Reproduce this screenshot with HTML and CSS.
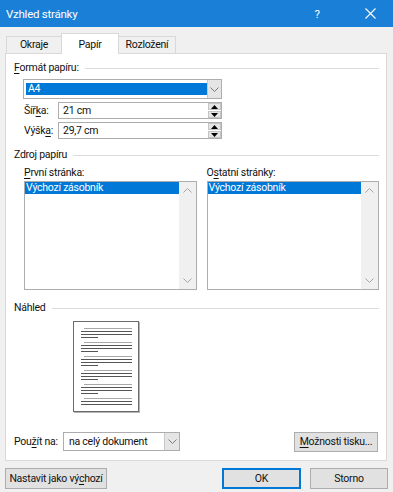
FILE: index.html
```html
<!DOCTYPE html>
<html lang="cs">
<head>
  <meta charset="UTF-8" />
  <title>Vzhled stránky</title>
  <link rel="stylesheet" href="styles.css">
</head>
<body>
  <div class="dialog">
    <header class="titlebar">
      <span class="title">Vzhled stránky</span>
      <span class="help">?</span>
      <span class="close">
        <svg width="11" height="11" viewBox="0 0 11 11"><path d="M0.5 0.5 L10.5 10.5 M10.5 0.5 L0.5 10.5" stroke="#fff" stroke-width="1.1" fill="none"/></svg>
      </span>
    </header>

    <nav class="tabs">
      <div class="tab">Okraje</div>
      <div class="tab active">Papír</div>
      <div class="tab">Rozložení</div>
    </nav>

    <main class="panel">
      <!-- Formát papíru -->
      <div class="group-title"><span><u>F</u>ormát papíru:</span></div>
      <div class="combo combo-format">
        <div class="combo-value"><span class="selected">A4</span></div>
        <div class="combo-btn">
          <svg width="9" height="5" viewBox="0 0 9 5"><path d="M0.5 0.5 L4.5 4.5 L8.5 0.5" stroke="#7a7a7a" fill="none"/></svg>
        </div>
      </div>
      <div class="field-row">
        <label class="field-label">Šíř<u>k</u>a:</label>
        <div class="spin">
          <span class="spin-value">21 cm</span>
          <div class="spin-btns">
            <span class="spin-btn"><svg width="7" height="4" viewBox="0 0 7 4"><path d="M3.5 0 L7 4 L0 4 Z" fill="#000"/></svg></span>
            <span class="spin-btn"><svg width="7" height="4" viewBox="0 0 7 4"><path d="M0 0 L7 0 L3.5 4 Z" fill="#000"/></svg></span>
          </div>
        </div>
      </div>
      <div class="field-row">
        <label class="field-label">Výšk<u>a</u>:</label>
        <div class="spin">
          <span class="spin-value">29,7 cm</span>
          <div class="spin-btns">
            <span class="spin-btn"><svg width="7" height="4" viewBox="0 0 7 4"><path d="M3.5 0 L7 4 L0 4 Z" fill="#000"/></svg></span>
            <span class="spin-btn"><svg width="7" height="4" viewBox="0 0 7 4"><path d="M0 0 L7 0 L3.5 4 Z" fill="#000"/></svg></span>
          </div>
        </div>
      </div>

      <!-- Zdroj papíru -->
      <div class="group-title group-source"><span>Zdroj papíru</span></div>
      <div class="sources">
        <div class="source">
          <div class="source-label"><u>P</u>rvní stránka:</div>
          <div class="listbox">
            <div class="list-items">
              <div class="list-item selected">Výchozí zásobník</div>
            </div>
            <div class="scrollbar">
              <svg width="9" height="5" viewBox="0 0 9 5"><path d="M0.5 4.5 L4.5 0.5 L8.5 4.5" stroke="#a6a6a6" fill="none"/></svg>
              <svg width="9" height="5" viewBox="0 0 9 5"><path d="M0.5 0.5 L4.5 4.5 L8.5 0.5" stroke="#a6a6a6" fill="none"/></svg>
            </div>
          </div>
        </div>
        <div class="source">
          <div class="source-label">O<u>s</u>tatní stránky:</div>
          <div class="listbox">
            <div class="list-items">
              <div class="list-item selected">Výchozí zásobník</div>
            </div>
            <div class="scrollbar">
              <svg width="9" height="5" viewBox="0 0 9 5"><path d="M0.5 4.5 L4.5 0.5 L8.5 4.5" stroke="#a6a6a6" fill="none"/></svg>
              <svg width="9" height="5" viewBox="0 0 9 5"><path d="M0.5 0.5 L4.5 4.5 L8.5 0.5" stroke="#a6a6a6" fill="none"/></svg>
            </div>
          </div>
        </div>
      </div>

      <!-- Náhled -->
      <div class="group-title group-preview"><span>Náhled</span></div>
      <div class="preview">
        <svg width="64" height="89" viewBox="0 0 64 89">
          <g stroke-width="1">
            <path d="M10 6.5 H58" stroke="#a8a8a8"/>
            <path d="M7 9.5 H58 M7 12.5 H58 M7 15.5 H24" stroke="#555"/>
            <path d="M10 20.5 H58" stroke="#a8a8a8"/>
            <path d="M7 23.5 H58 M7 26.5 H58 M7 29.5 H24" stroke="#555"/>
            <path d="M10 34.5 H58" stroke="#a8a8a8"/>
            <path d="M7 37.5 H58 M7 40.5 H58 M7 43.5 H24" stroke="#555"/>
            <path d="M10 48.5 H58" stroke="#a8a8a8"/>
            <path d="M7 51.5 H58 M7 54.5 H58 M7 57.5 H24" stroke="#555"/>
            <path d="M10 62.5 H58" stroke="#a8a8a8"/>
            <path d="M7 65.5 H58 M7 68.5 H58 M7 71.5 H24" stroke="#555"/>
            <path d="M10 76.5 H58" stroke="#a8a8a8"/>
            <path d="M7 79.5 H58 M7 82.5 H58" stroke="#555"/>
          </g>
        </svg>
      </div>

      <div class="apply-row">
        <label class="apply-label">Pou<u>ž</u>ít na:</label>
        <div class="combo combo-apply">
          <div class="combo-value">na celý dokument</div>
          <div class="combo-btn">
            <svg width="9" height="5" viewBox="0 0 9 5"><path d="M0.5 0.5 L4.5 4.5 L8.5 0.5" stroke="#7a7a7a" fill="none"/></svg>
          </div>
        </div>
        <span class="spacer"></span>
        <button class="btn btn-print"><u>M</u>ožnosti tisku...</button>
      </div>
    </main>

    <footer class="actions">
      <button class="btn btn-default">Nastavit jako vý<u>c</u>hozí</button>
      <span class="spacer"></span>
      <button class="btn btn-ok">OK</button>
      <button class="btn btn-cancel">Storno</button>
    </footer>
  </div>
</body>
</html>
```

FILE: styles.css
```css
body {
  margin: 0;
  background: #f0f0f0;
  font-family: Roboto, "Noto Sans", sans-serif;
  font-size: 10.5px;
  letter-spacing: -0.25px;
  color: #111;
  white-space: nowrap;
}

u {
  text-decoration-thickness: 1px;
  text-underline-offset: 2px;
}

.dialog {
  width: 393px;
  height: 492px;
  display: flex;
  flex-direction: column;
}

/* Barre de titre */
.titlebar {
  height: 27px;
  background: #1a7fd6;
  color: #fff;
  display: flex;
  align-items: center;
  padding: 0 0 0 6px;
  font-size: 11.5px;
}

.title {
  flex: 1;
}

.help {
  width: 20px;
  margin-right: 20px;
  text-align: center;
}

.close {
  width: 46px;
  display: flex;
  justify-content: center;
}

/* Onglets */
.tabs {
  height: 26px;
  display: flex;
  align-items: flex-end;
  padding-left: 6px;
  position: relative;
  z-index: 1;
}

.tab {
  height: 17px;
  line-height: 16px;
  border: 1px solid #d9d9d9;
  border-bottom: none;
  box-sizing: border-box;
  background: #f0f0f0;
  text-align: center;
}

.tab:nth-child(1) { width: 55px; border-right: none; }
.tab:nth-child(2) { width: 58px; }
.tab:nth-child(3) { width: 57px; border-left: none; }

.tab.active {
  height: 21px;
  margin-bottom: -1px;
  background: #fff;
  line-height: 22px;
}

/* Panneau */
.panel {
  height: 408px;
  box-sizing: border-box;
  margin: 0 6px 0 5px;
  background: #fff;
  border: 1px solid #d9d9d9;
  padding: 0 7px 0 8px;
  display: flex;
  flex-direction: column;
}

.group-title {
  height: 14px;
  line-height: 14px;
  margin-top: 7px;
  display: flex;
  align-items: center;
}

.group-title::after {
  content: "";
  flex: 1;
  border-top: 1px solid #dcdcdc;
  margin-left: 6px;
}

.group-source { margin-top: 9px; }
.group-preview { margin-top: 11px; }

/* Combos */
.combo {
  display: flex;
  box-sizing: border-box;
  border: 1px solid #adadad;
  background: #fff;
}

.combo-value {
  flex: 1;
  display: flex;
  align-items: center;
}

.combo-btn {
  width: 13px;
  display: flex;
  align-items: center;
  justify-content: center;
  background: #e5e5e5;
  border-left: 1px solid #c8c8c8;
}

.combo-format {
  margin: 4px 0 0 9px;
  width: 199px;
  height: 20px;
}

.combo-format .combo-value {
  padding: 3px 0 3px 2px;
}

.selected {
  background: #0078d7;
  color: #fff;
}

.combo-format .selected {
  flex: 1;
  height: 12px;
  line-height: 12px;
  padding-left: 2px;
}

/* Champs Šířka / Výška */
.field-row {
  display: flex;
  align-items: center;
  margin: 3px 0 0 10px;
  height: 17px;
}

.field-label {
  width: 34px;
}

.spin {
  width: 164px;
  height: 17px;
  box-sizing: border-box;
  border: 1px solid #adadad;
  display: flex;
  align-items: center;
}

.spin-value {
  flex: 1;
  padding-left: 4px;
}

.spin-btns {
  width: 13px;
  height: 15px;
  display: flex;
  flex-direction: column;
  gap: 1px;
}

.spin-btn {
  flex: 1;
  display: flex;
  align-items: center;
  justify-content: center;
  background: #e5e5e5;
  border: 1px solid #c4c4c4;
  box-sizing: border-box;
}

/* Zdroj papíru */
.sources {
  display: flex;
  gap: 10px;
  margin: 4px 0 0 10px;
}

.source {
  width: 173px;
}

.source-label {
  height: 14px;
  line-height: 14px;
  margin-bottom: 1px;
}

.listbox {
  height: 109px;
  box-sizing: border-box;
  border: 1px solid #adadad;
  display: flex;
}

.list-items {
  flex: 1;
}

.list-item {
  height: 12px;
  line-height: 12px;
  padding-left: 1px;
}

.scrollbar {
  width: 17px;
  background: #f0f0f0;
  display: flex;
  flex-direction: column;
  justify-content: space-between;
  align-items: center;
  padding: 6px 0;
}

/* Náhled */
.preview {
  margin: 6px 0 0 59px;
  width: 66px;
  height: 91px;
  box-sizing: border-box;
  border: 1px solid #6b6b6b;
  box-shadow: 1px 1px 0 #b5b5b5;
  background: #fff;
}

.preview svg {
  display: block;
}

/* Použít na */
.apply-row {
  display: flex;
  align-items: center;
  margin-top: 20px;
  height: 19px;
}

.apply-label {
  width: 49px;
}

.combo-apply {
  width: 117px;
  height: 19px;
}

.combo-apply .combo-value {
  padding-left: 5px;
}

.combo-apply .combo-btn {
  width: 14px;
}

.spacer {
  flex: 1;
}

/* Boutons */
.btn {
  font: inherit;
  letter-spacing: inherit;
  color: #111;
  background: #e1e1e1;
  border: 1px solid #adadad;
  padding: 0;
  height: 21px;
  box-sizing: border-box;
  white-space: nowrap;
}

.btn-print {
  width: 84px;
  height: 20px;
  margin-right: 1px;
}

.actions {
  display: flex;
  margin-top: 7px;
  padding: 0 5px 0 5px;
}

.btn-default {
  width: 102px;
}

.btn-ok {
  width: 79px;
  border-color: #0078d7;
  box-shadow: inset 0 0 0 1px #0078d7;
  margin-right: 9px;
}

.btn-cancel {
  width: 78px;
}
```
